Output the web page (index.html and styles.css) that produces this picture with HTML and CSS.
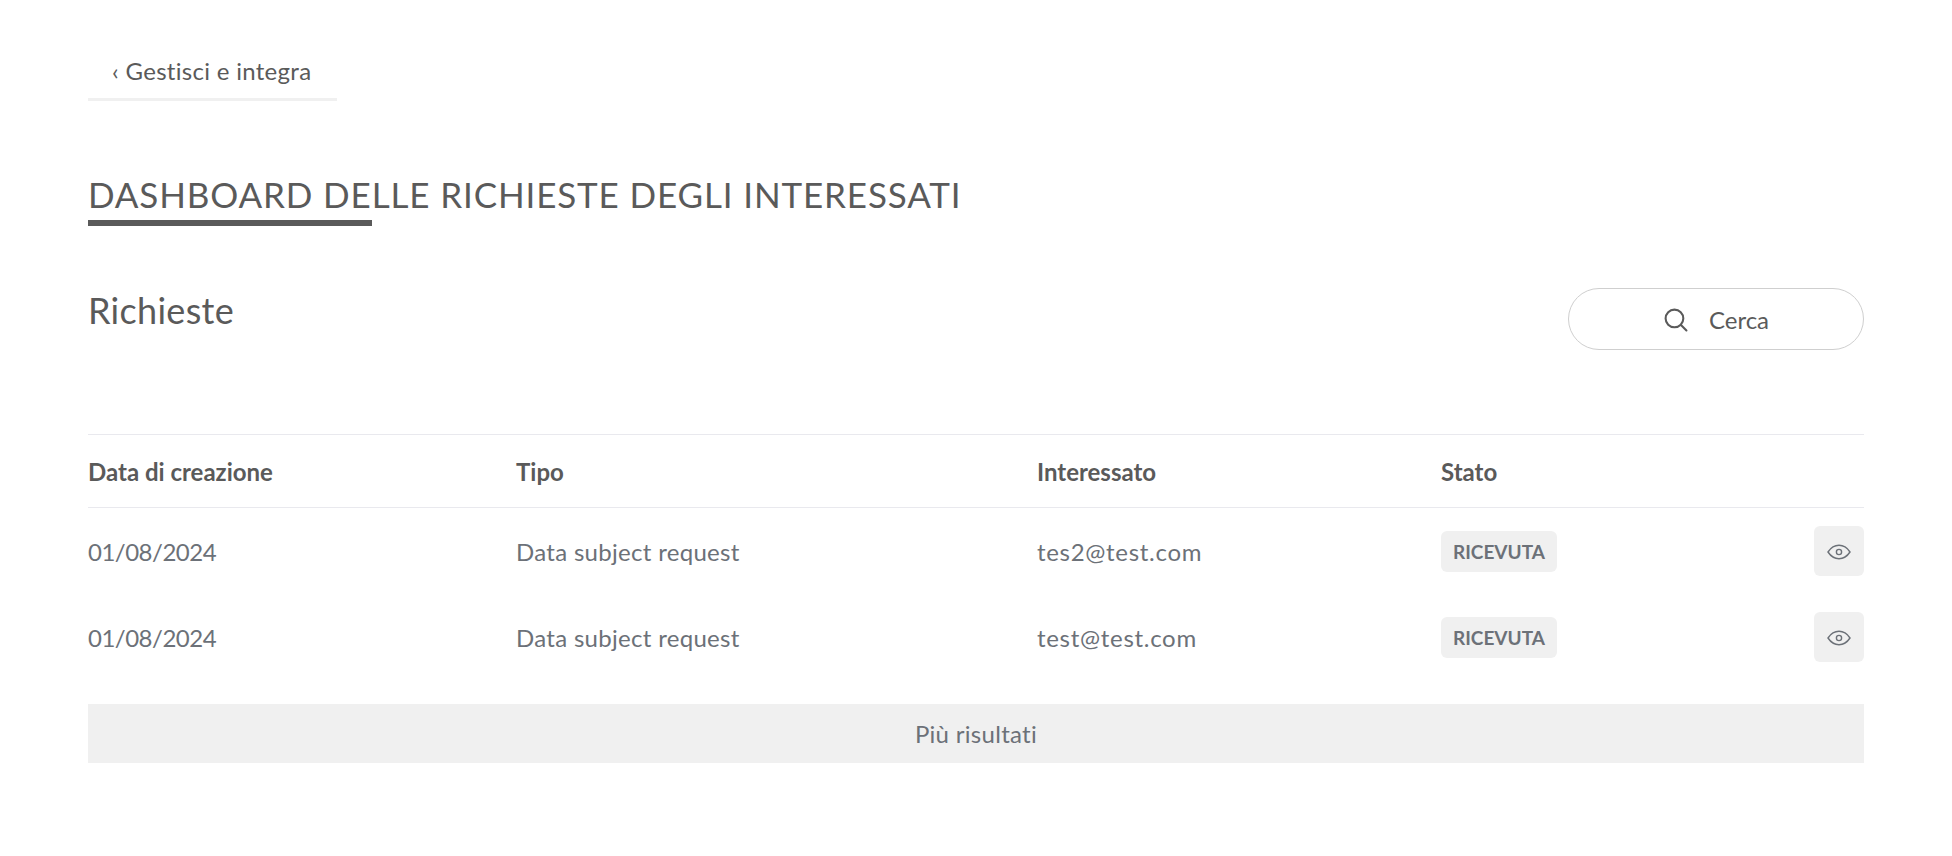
FILE: index.html
```html
<!DOCTYPE html>
<html lang="en">
<head>
    <meta charset="UTF-8">
    <meta name="viewport" content="width=device-width, initial-scale=1.0">
    <title>Dashboard delle richieste degli interessati</title>
    <link rel="stylesheet" href="styles.css">
</head>
<body>

<div class="container">

    <!-- Back tab -->
    <nav class="tabs">
        <a class="tab" href="#">‹ Gestisci e integra</a>
    </nav>

    <h1 class="page-title">DASHBOARD DELLE RICHIESTE DEGLI INTERESSATI</h1>
    <div class="title-bar"></div>

    <!-- Heading and search -->
    <section class="toolbar">
        <h2>Richieste</h2>
        <button class="search">
            <svg class="search-icon" width="25" height="25" viewBox="0 0 24 24" fill="none" stroke="currentColor" stroke-width="2" stroke-linecap="round">
                <circle cx="11" cy="11" r="8.500"/>
                <path d="M17.500 17.500l5 5"/>
            </svg>
            <span>Cerca</span>
        </button>
    </section>

    <!-- Requests table -->
    <section class="requests">
        <div class="row head">
            <div>Data di creazione</div>
            <div>Tipo</div>
            <div>Interessato</div>
            <div>Stato</div>
            <div></div>
        </div>
        <div class="row">
            <div class="date">01/08/2024</div>
            <div>Data subject request</div>
            <div class="email">tes2@test.com</div>
            <div><span class="badge">RICEVUTA</span></div>
            <div class="actions">
                <button class="view">
                    <svg width="24" height="24" viewBox="0 0 24 24" fill="none" stroke="currentColor" stroke-width="1.4">
                        <path d="M1 12c3-4.500 6.700-6.700 11-6.700S20 7.500 23 12c-3 4.500-6.700 6.700-11 6.700S4 16.500 1 12z"/>
                        <circle cx="12" cy="12" r="2.600"/>
                    </svg>
                </button>
            </div>
        </div>
        <div class="row">
            <div class="date">01/08/2024</div>
            <div>Data subject request</div>
            <div class="email">test@test.com</div>
            <div><span class="badge">RICEVUTA</span></div>
            <div class="actions">
                <button class="view">
                    <svg width="24" height="24" viewBox="0 0 24 24" fill="none" stroke="currentColor" stroke-width="1.4">
                        <path d="M1 12c3-4.500 6.700-6.700 11-6.700S20 7.500 23 12c-3 4.500-6.700 6.700-11 6.700S4 16.500 1 12z"/>
                        <circle cx="12" cy="12" r="2.600"/>
                    </svg>
                </button>
            </div>
        </div>
    </section>

    <button class="more">Più risultati</button>

</div>

</body>
</html>
```

FILE: styles.css
```css
/* Styles for the dashboard */
body {
    font-family: "Lato", "Open Sans", sans-serif;
    margin: 0;
    padding: 0;
    background-color: #fff;
    color: #5a5a5a;
}
button {
    font-family: inherit;
    border: none;
    cursor: pointer;
}
.container {
    padding: 48px 88px 0;
}
.tabs {
    display: flex;
}
.tab {
    display: block;
    width: 249px;
    box-sizing: border-box;
    padding: 8px 24px 12px;
    height: 53px;
    border-bottom: 3px solid #f0f0f0;
    font-size: 24px;
    line-height: 29px;
    letter-spacing: 0.3px;
    color: #5a5a5a;
    text-decoration: none;
}
.page-title {
    margin: 70px 0 0;
    font-size: 35px;
    line-height: 46px;
    font-weight: 400;
    letter-spacing: 0.86px;
    color: #5a5a5a;
}
.title-bar {
    width: 284px;
    height: 6px;
    margin-top: 3px;
    background-color: #5a5a5a;
}
.toolbar {
    display: flex;
    justify-content: space-between;
    align-items: flex-start;
    margin-top: 62px;
}
.toolbar h2 {
    margin: 0;
    font-size: 36px;
    line-height: 44px;
    font-weight: 400;
    letter-spacing: 0.3px;
    color: #5a5a5a;
}
.search {
    display: flex;
    align-items: center;
    justify-content: center;
    gap: 21px;
    width: 296px;
    height: 62px;
    padding: 0;
    background-color: #fff;
    border: 1px solid #cfcfcf;
    border-radius: 31px;
    font-size: 24px;
    color: #5a5a5a;
}
.requests {
    margin-top: 84px;
    border-top: 1px solid #e9e9ee;
}
.row {
    display: grid;
    grid-template-columns: 428px 521px 404px 1fr 60px;
    align-items: center;
    height: 86px;
    font-size: 24px;
    letter-spacing: 0.3px;
    color: #6c7178;
}
.row.head {
    height: 73px;
    padding-top: 1px;
    box-sizing: border-box;
    border-bottom: 1px solid #e9e9ee;
    font-weight: 700;
    letter-spacing: 0;
    color: #5a5a5a;
}
.date {
    letter-spacing: -0.5px;
}
.email {
    letter-spacing: 0.7px;
}
.badge {
    display: inline-block;
    padding: 0 12px;
    height: 41px;
    line-height: 41px;
    border-radius: 6px;
    background-color: #f0f0f0;
    font-size: 19px;
    font-weight: 700;
    letter-spacing: 0;
}
.actions {
    display: flex;
    justify-content: flex-end;
}
.view {
    display: flex;
    align-items: center;
    justify-content: center;
    width: 50px;
    height: 50px;
    padding: 2px 0 0;
    border-radius: 6px;
    background-color: #f0f0f0;
    color: #6c7178;
}
.more {
    display: block;
    width: 100%;
    height: 59px;
    margin-top: 24px;
    background-color: #f0f0f0;
    font-size: 24px;
    letter-spacing: 0.3px;
    color: #6c7178;
}
```
